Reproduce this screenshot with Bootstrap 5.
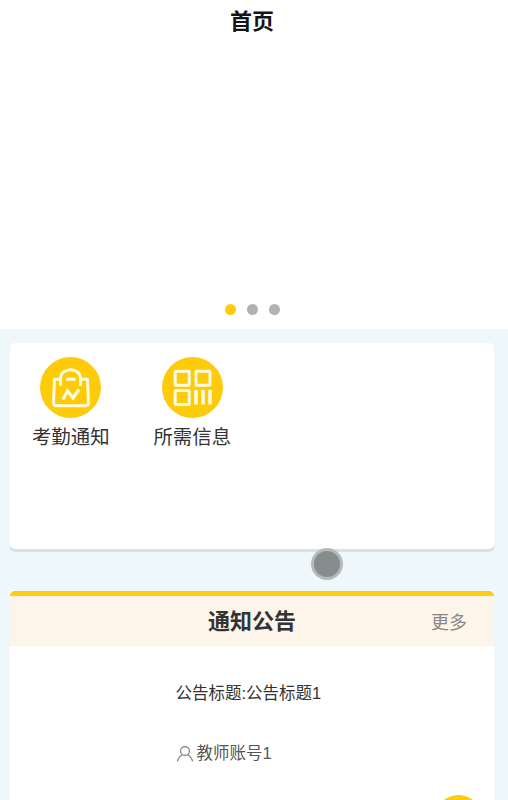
<!DOCTYPE html>
<html lang="zh-CN">
<head>
<meta charset="utf-8">
<meta name="viewport" content="width=device-width, initial-scale=1">
<title>首页</title>
<link href="https://cdn.jsdelivr.net/npm/bootstrap@5.3.0/dist/css/bootstrap.min.css" rel="stylesheet">
<style>
body{font-family:"Liberation Sans","Noto Sans CJK SC",sans-serif;background:#eef7fa;color:#333;height:800px}
.page-head{height:42px;font-size:22px;line-height:44px;color:#151515}
.banner{height:286.5px;padding-bottom:14px;gap:11px}
.dot{width:11px;height:11px;background:#b2b2b2}
.dot-on{background:#fecb0a}
.main-area{padding:14px 14px 0 10px}
.menu-box{height:206.5px;border-radius:5px;box-shadow:0 3px 0 #d8e1e3;padding-top:14.500px}
.menu-item{width:121.5px;color:#333}
.menu-item svg{width:61px;height:61px}
.menu-item span{font-size:19.4px;line-height:26px;margin-top:5.500px}
.news-box{margin-top:42px;height:209px;border-top:5px solid #fccd12;border-radius:5px 5px 0 0}
.news-head{height:50px;background:#fef5ea}
.news-head h2{font-size:22px;line-height:52px;color:#333}
.news-head a{font-size:18px;right:27px;top:14px;line-height:27px;color:#888}
.news-body{padding:35px 0 0 165.5px;font-size:16.5px;line-height:25px}
.author{margin-top:35px;color:#555;gap:3px}
.touch{left:310.5px;top:548px;width:32px;height:32px;background:#878d8d;border:3px solid #b4baba}
.overlay{height:800px;pointer-events:none}
.float-btn{left:435px;top:795px;width:47px;height:47px;background:#fecb0a}
</style>
</head>
<body class="position-relative overflow-hidden">
<header class="page-head bg-white text-center fw-bold"><div class="pe-1">首页</div></header>
<section class="banner bg-white d-flex justify-content-center align-items-end pe-1">
  <span class="dot dot-on rounded-circle"></span><span class="dot rounded-circle"></span><span class="dot rounded-circle"></span>
</section>
<main class="main-area">
  <nav class="menu-box bg-white d-flex align-items-start">
    <a class="menu-item d-flex flex-column align-items-center text-decoration-none" href="#">
      <svg viewBox="0 0 61 61" fill="none" stroke="#fffbe0" stroke-width="3" stroke-linejoin="round">
        <circle cx="30.5" cy="30.5" r="30.5" fill="#fecb0a" stroke="none"/>
        <path d="M20.500 22.300H14.500L13.500 46Q13.500 48.700 16.500 48.700H45.500Q48.500 48.700 48.500 46L47.500 22.300H40.500M20.500 28.800V22C20.500 9.500 40.500 9.500 40.500 22V28.800M26 22.300H35.500"/>
        <path d="M22.800 42.500L27.500 34L33 41L38.800 32.500" stroke-width="3.200" stroke-linejoin="miter"/>
      </svg>
      <span>考勤通知</span>
    </a>
    <a class="menu-item d-flex flex-column align-items-center text-decoration-none" href="#">
      <svg viewBox="0 0 61 61" fill="none" stroke="#fffbe0" stroke-width="3">
        <circle cx="30.5" cy="30.5" r="30.5" fill="#fecb0a" stroke="none"/>
        <rect x="13.200" y="14.300" width="14" height="14" rx=".8"/>
        <rect x="34" y="14.300" width="14" height="14" rx=".8"/>
        <rect x="13.200" y="33.500" width="14" height="14" rx=".8"/>
        <path d="M34 33V47.500M41 33V47.500M48 33V47.500" stroke-width="3.600"/>
      </svg>
      <span>所需信息</span>
    </a>
  </nav>
  <section class="news-box bg-white overflow-hidden">
    <div class="news-head position-relative text-center">
      <h2 class="fw-bold m-0">通知公告</h2>
      <a class="position-absolute text-decoration-none" href="#">更多</a>
    </div>
    <div class="news-body">
      <div>公告标题:公告标题1</div>
      <div class="author d-flex align-items-center">
        <svg width="18" height="18" viewBox="0 0 18 18" fill="none" stroke="#777" stroke-width="1.1"><circle cx="9" cy="6" r="4.400"/><path d="M1.500 16.500C2 12.500 4.500 10.800 6.300 9.700M11.700 9.700C13.500 10.800 16 12.500 16.500 16.500"/></svg>
        <span>教师账号1</span>
      </div>
    </div>
  </section>
</main>
<div class="overlay position-absolute top-0 start-0 w-100 overflow-hidden">
  <span class="touch position-absolute rounded-circle"></span>
  <span class="float-btn position-absolute rounded-circle"></span>
</div>
<script src="https://cdn.jsdelivr.net/npm/bootstrap@5.3.0/dist/js/bootstrap.bundle.min.js"></script>
</body>
</html>
